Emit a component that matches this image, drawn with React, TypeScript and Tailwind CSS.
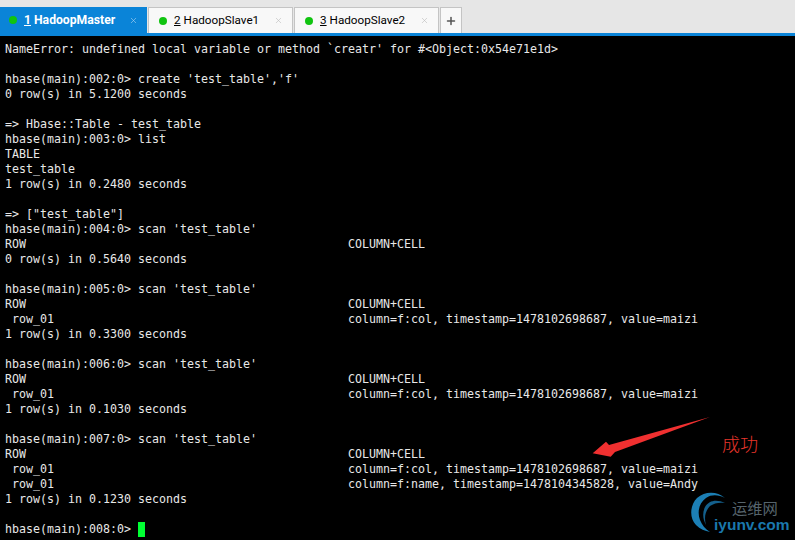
import { Plus, X } from "lucide-react";

const lines = [
  "NameError: undefined local variable or method `creatr' for #<Object:0x54e71e1d>",
  "",
  "hbase(main):002:0> create 'test_table','f'",
  "0 row(s) in 5.1200 seconds",
  "",
  "=> Hbase::Table - test_table",
  "hbase(main):003:0> list",
  "TABLE",
  "test_table",
  "1 row(s) in 0.2480 seconds",
  "",
  '=> ["test_table"]',
  "hbase(main):004:0> scan 'test_table'",
  "ROW                                              COLUMN+CELL",
  "0 row(s) in 0.5640 seconds",
  "",
  "hbase(main):005:0> scan 'test_table'",
  "ROW                                              COLUMN+CELL",
  " row_01                                          column=f:col, timestamp=1478102698687, value=maizi",
  "1 row(s) in 0.3300 seconds",
  "",
  "hbase(main):006:0> scan 'test_table'",
  "ROW                                              COLUMN+CELL",
  " row_01                                          column=f:col, timestamp=1478102698687, value=maizi",
  "1 row(s) in 0.1030 seconds",
  "",
  "hbase(main):007:0> scan 'test_table'",
  "ROW                                              COLUMN+CELL",
  " row_01                                          column=f:col, timestamp=1478102698687, value=maizi",
  " row_01                                          column=f:name, timestamp=1478104345828, value=Andy",
  "1 row(s) in 0.1230 seconds",
  "",
];

const tabs = [
  { num: "1", name: "HadoopMaster", active: true },
  { num: "2", name: "HadoopSlave1", active: false },
  { num: "3", name: "HadoopSlave2", active: false },
];

function Tab({ num, name, active }: { num: string; name: string; active: boolean }) {
  return (
    <div
      className={
        active
          ? "flex h-[26px] w-[147px] items-center bg-[#0a84d8] pl-[9px] pr-[9px] text-[12.2px] font-bold text-white"
          : "flex h-[26px] w-[145px] items-center border border-b-0 border-[#c4c4c4] bg-[#f8f8f8] pl-[10px] pr-[9px] text-[11.7px] text-black"
      }
    >
      <span className="h-[8px] w-[8px] rounded-full bg-[#10c410]" />
      <span className="ml-[7px] underline">{num}</span>
      <span className="ml-[3px]">{name}</span>
      <X className={active ? "ml-auto text-[#b5d8f0]" : "ml-auto text-[#b8b8b8]"} size={9} strokeWidth={1.5} />
    </div>
  );
}

export default function App() {
  return (
    <div className="relative flex h-[540px] w-[795px] flex-col overflow-hidden bg-black">
      <div className="flex h-[33px] items-end gap-[1px] bg-[#e6e6e6] font-['Roboto',sans-serif]">
        {tabs.map((t) => (
          <Tab key={t.num} {...t} />
        ))}
        <div className="flex h-[26px] w-[22px] items-center justify-center border border-b-0 border-[#c4c4c4] bg-[#f8f8f8] text-[#555]">
          <Plus size={12} strokeWidth={3} />
        </div>
      </div>
      <div className="h-[3px] bg-[#0a84d8]" />
      <div className="pl-[5px] pt-[6px] font-['DejaVu_Sans_Mono',monospace] text-[11.63px] leading-[15px] text-[#e8e8e8]">
        {lines.map((l, i) => (
          <pre key={i} className="h-[15px] font-['DejaVu_Sans_Mono',monospace]">
            {l}
          </pre>
        ))}
        <div className="flex h-[15px] items-center">
          <pre className="font-['DejaVu_Sans_Mono',monospace]">hbase(main):008:0&gt; </pre>
          <span className="h-[15px] w-[7px] bg-[#00ff33]" />
        </div>
      </div>

      {/* red annotation */}
      <svg className="absolute left-[590px] top-[415px]" width="125" height="45" viewBox="0 0 125 45">
        <path d="M2.7 38.3 L16 26.7 L19 30 L120 2 L25 37 L20.7 41.7 Z" fill="#f03030" />
      </svg>
      <span className="absolute left-[722px] top-[432px] font-['Noto_Sans_CJK_SC',sans-serif] text-[18px] font-light leading-[22px] text-[#e8352b]">
        成功
      </span>

      {/* watermark */}
      <svg className="absolute left-[685px] top-[488px]" width="45" height="50" viewBox="0 0 45 50">
        <path d="M40 10 C32 3 20 3 12 10 C5 17 4 30 11 37 C15 41 20 43 25 44 C20 41 17 37 15 32 C12 24 14 15 21 10 C27 6 34 7 40 10 Z" fill="#1c7fb5" />
        <path d="M40 15 C32 11 24 12 20 19 C17 25 18 32 21 37 C19 30 20 23 25 18 C29 15 35 14 40 15 Z" fill="#14608c" />
      </svg>
      <span className="absolute left-[732px] top-[497px] font-['Noto_Sans_CJK_SC',sans-serif] text-[15.3px] leading-[20px] text-[#56646c]">
        运维网
      </span>
      <span className="absolute left-[714px] top-[515px] font-['Liberation_Sans',sans-serif] text-[15.5px] font-bold leading-[20px] text-[#1a78ad]">
        iyunv.com
      </span>
    </div>
  );
}
